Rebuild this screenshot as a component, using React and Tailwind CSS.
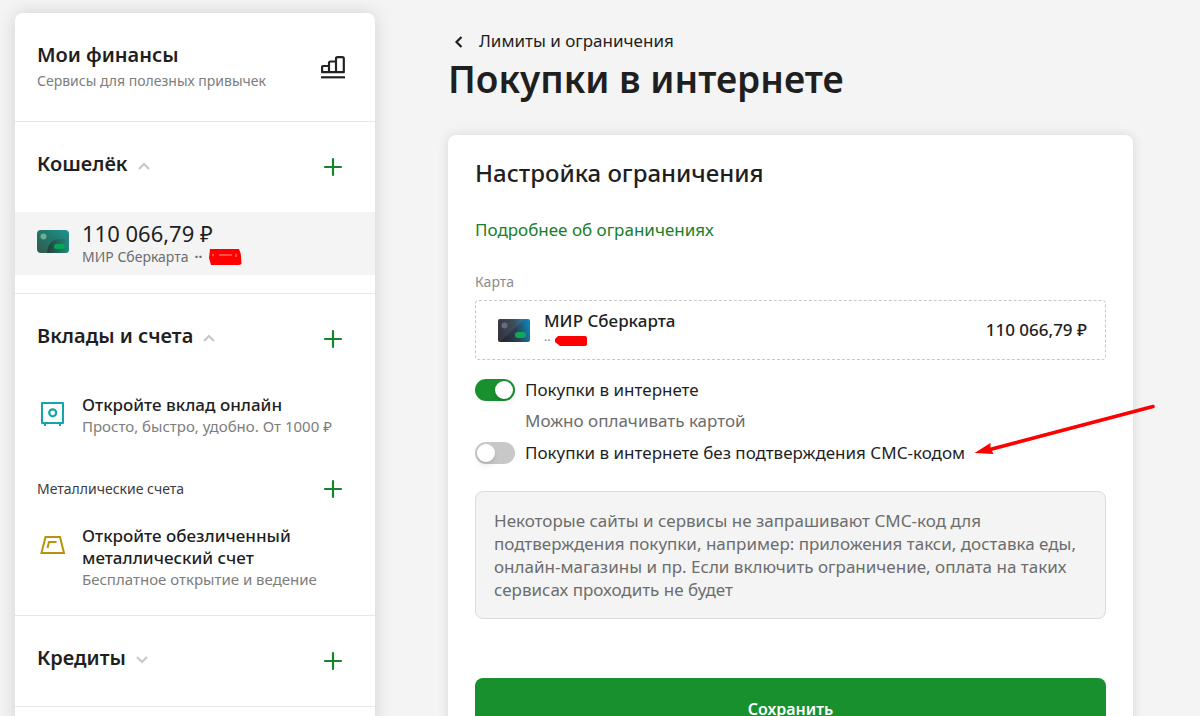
import { useState } from "react";

function PlusButton({ label }) {
  return (
    <button type="button" aria-label={label} className="shrink-0 text-[#16842b]">
      <svg width="20" height="20" viewBox="0 0 20 20" fill="none" stroke="currentColor" strokeWidth="2.2" strokeLinecap="round">
        <path d="M10 2v16M2 10h16" />
      </svg>
    </button>
  );
}

function Caret({ open }) {
  return (
    <svg width="12" height="8" viewBox="0 0 12 8" fill="none" stroke="#c8c8c8" strokeWidth="2.2" className="mt-1">
      <path d={open ? "M1 7l5-5 5 5" : "M1 1l5 5 5-5"} />
    </svg>
  );
}

function SectionHeader({ title, open, addLabel }) {
  return (
    <div className="flex h-[90px] items-center justify-between">
      <button type="button" aria-expanded={open} className="flex items-center gap-2.5 pb-1.5 text-xl font-semibold">
        {title}
        <Caret open={open} />
      </button>
      <PlusButton label={addLabel} />
    </div>
  );
}

function ChartIcon() {
  return (
    <svg width="24" height="24" viewBox="0 0 24 24" fill="none" stroke="#222" strokeWidth="2.2" strokeLinejoin="round">
      <path d="M1.100 17.200V12a1 1 0 0 1 1-1H8v6.200zM8 17.200V8a1.500 1.500 0 0 1 1.500-1.500H15v10.700zM15 17.200V3.700A1.500 1.500 0 0 1 16.500 2.200h4.800a1.500 1.500 0 0 1 1.500 1.500v13.500z" />
      <path d="M0 22.300h24" />
    </svg>
  );
}

function GreenCard() {
  return (
    <svg width="32" height="23" viewBox="0 0 32 23" className="shrink-0">
      <defs>
        <linearGradient id="green-card" x1="0" y1="1" x2="1" y2="0">
          <stop offset="0" stopColor="#34584a" />
          <stop offset="0.6" stopColor="#217a70" />
          <stop offset="1" stopColor="#1f9490" />
        </linearGradient>
        <linearGradient id="green-card-wave" x1="0" y1="0" x2="1" y2="0">
          <stop offset="0" stopColor="#1f4038" />
          <stop offset="1" stopColor="#248a80" />
        </linearGradient>
      </defs>
      <rect width="32" height="23" rx="4" fill="url(#green-card)" />
      <path d="M10 23C11 13 16 9 24 9c4 0 7-1 8-3v13a4 4 0 0 1-4 4z" fill="url(#green-card-wave)" />
      <circle cx="6.500" cy="6.500" r="3" fill="#6cae96" />
      <rect x="17" y="14" width="11" height="5" rx="2.500" fill="#08a652" />
    </svg>
  );
}

function DarkCard() {
  return (
    <svg width="32" height="23" viewBox="0 0 32 23" className="shrink-0">
      <defs>
        <linearGradient id="dark-card" x1="0" y1="0.600" x2="1" y2="0.400">
          <stop offset="0" stopColor="#23232f" />
          <stop offset="0.550" stopColor="#2f3d4c" />
          <stop offset="1" stopColor="#0c84b8" />
        </linearGradient>
      </defs>
      <rect width="32" height="23" rx="2" fill="url(#dark-card)" />
      <path d="M2 23L27 0H2a2 2 0 0 0-2 2v19a2 2 0 0 0 2 2z" fill="#fff" opacity="0.080" />
      <circle cx="6.500" cy="6.500" r="3" fill="#6a6a78" />
      <rect x="17" y="13" width="11" height="6" rx="3" fill="#10a858" />
    </svg>
  );
}

function SafeIcon() {
  return (
    <svg width="32" height="28" viewBox="0 0 32 28" fill="none" stroke="#12a5ab" strokeWidth="2" className="shrink-0">
      <path d="M5 3h21v20H5z" strokeLinejoin="round" />
      <path d="M8 23v3M23 23v3" />
      <circle cx="15.700" cy="12.800" r="3.500" strokeWidth="2.200" />
    </svg>
  );
}

function IngotIcon() {
  return (
    <svg width="32" height="30" viewBox="0 0 32 30" fill="none" stroke="#b8920a" strokeWidth="2" className="shrink-0">
      <path d="M8.500 6h14.500l4 16H4.500z" />
      <path d="M10.500 17l1.500-6h7.500" />
    </svg>
  );
}

function Offer({ icon, title, note }) {
  return (
    <a href="#" className="flex items-start gap-[13px]">
      <span className="mt-1.5">{icon}</span>
      <span>
        <span className="block text-[17px] leading-[22px] font-medium">{title}</span>
        <span className="block text-[15px] leading-5 text-[#7d7d7d]">{note}</span>
      </span>
    </a>
  );
}

function Sidebar() {
  return (
    <aside className="w-[360px] shrink-0 rounded-lg bg-white shadow-[0_0_18px_rgba(0,0,0,0.14)]">
      <div className="flex h-[109px] items-center justify-between border-b border-[#e8e8e8] px-[22px]">
        <div>
          <h2 className="text-xl leading-7 font-semibold">Мои финансы</h2>
          <p className="text-sm leading-6 text-[#7d7d7d]">Сервисы для полезных привычек</p>
        </div>
        <span className="mr-2">
          <ChartIcon />
        </span>
      </div>

      <section className="border-b border-[#e8e8e8] pb-[18px]">
        <div className="pr-8 pl-[22px]">
          <SectionHeader title="Кошелёк" open addLabel="Добавить в кошелёк" />
        </div>
        <a href="#" className="flex h-[63px] items-start gap-[13px] bg-[#f4f4f4] px-[22px] pt-2">
          <span className="mt-2.5">
            <GreenCard />
          </span>
          <span>
            <span className="block text-[22px] leading-[26px]">110 066,79 ₽</span>
            <span className="flex items-center gap-1.5 text-sm leading-[22px] text-[#6d6d6d]">
              <span>МИР Сберкарта</span>
              <span className="font-bold">··</span>
              <svg width="34" height="18" viewBox="0 0 34 18">
                <path d="M2 1L31 1Q33 5 33 9L33.500 16L31 17L3 17L1 10Z" fill="#fe0000" />
                <path d="M4 7h2M11 7h13M28 6v3" stroke="#ff9c9c" strokeWidth="1" />
              </svg>
            </span>
          </span>
        </a>
      </section>

      <section className="border-b border-[#e8e8e8] pr-8 pb-[26px] pl-[22px]">
        <SectionHeader title="Вклады и счета" open addLabel="Открыть вклад или счёт" />
        <div className="pt-2.5">
          <Offer icon={<SafeIcon />} title="Откройте вклад онлайн" note="Просто, быстро, удобно. От 1000 ₽" />
        </div>
        <div className="flex items-center justify-between pt-[43px] pb-[26px]">
          <h3 className="text-sm leading-5 text-[#3c3c3c]">Металлические счета</h3>
          <PlusButton label="Открыть металлический счёт" />
        </div>
        <Offer
          icon={<IngotIcon />}
          title={<>Откройте обезличенный<br />металлический счет</>}
          note="Бесплатное открытие и ведение"
        />
      </section>

      <section className="border-b border-[#e8e8e8] pr-8 pl-[22px]">
        <SectionHeader title="Кредиты" open={false} addLabel="Оформить кредит" />
      </section>
    </aside>
  );
}

function Toggle({ id, label, checked, onChange }) {
  return (
    <div className="flex items-center gap-2.5">
      <input
        id={id}
        type="checkbox"
        role="switch"
        checked={checked}
        onChange={e => onChange(e.target.checked)}
        className="h-[22px] w-10 shrink-0 cursor-pointer appearance-none rounded-full bg-[#c8c8c8] p-0.5 transition before:block before:size-[18px] before:rounded-full before:bg-white before:shadow-md before:transition checked:bg-[#18902e] checked:before:translate-x-[18px]"
      />
      <label htmlFor={id} className="text-[17px] leading-6">{label}</label>
    </div>
  );
}

function Arrow() {
  return (
    <svg width="184" height="58" viewBox="0 0 184 58" className="pointer-events-none absolute -top-10 -right-[50px]">
      <path d="M181 5.500L18 48.500" stroke="#fe0000" strokeWidth="3.500" strokeLinecap="round" />
      <path d="M2.500 52L18.500 42L18.500 47L21.500 53Z" fill="#fe0000" />
    </svg>
  );
}

export default function App() {
  const [online, setOnline] = useState(true);
  const [withoutSms, setWithoutSms] = useState(false);

  return (
    <div className="flex min-h-screen gap-[73px] bg-[#f4f4f4] pt-[13px] pr-[67px] pl-[15px] font-['Noto_Sans',sans-serif] text-[#1f1f1f]">
      <Sidebar />

      <main className="min-w-0 flex-1 pt-4">
        <a href="#" className="flex items-center gap-3.5 pl-1.5 text-[17px] leading-6">
          <svg width="11" height="12" viewBox="0 0 11 12" fill="none" stroke="#1f1f1f" strokeWidth="2.2" className="mt-0.5">
            <path d="M7.500 1l-5 5 5 5" />
          </svg>
          Лимиты и ограничения
        </a>
        <h1 className="text-[37px] leading-[52px] font-semibold">Покупки в интернете</h1>

        <form
          onSubmit={e => e.preventDefault()}
          className="mt-[30px] rounded-lg bg-white px-[27px] pt-[22px] pb-8 shadow-[0_0_12px_rgba(0,0,0,0.12)]"
        >
          <h2 className="text-2xl leading-8 font-medium">Настройка ограничения</h2>
          <a href="#" className="mt-[29px] block text-[17px] leading-6 text-[#16802c]">Подробнее об ограничениях</a>

          <p className="mt-[30px] text-sm leading-5 text-[#8c8c8c]">Карта</p>
          <div className="mt-2 flex h-[60px] items-center rounded border border-dashed border-[#c8c8c8] pr-[18px] pl-[22px]">
            <DarkCard />
            <div className="ml-3.5 flex-1">
              <div className="text-[17px] leading-[22px] font-medium">МИР Сберкарта</div>
              <div className="flex h-[18px] items-center gap-1 text-xs text-[#7d7d7d]">
                ··
                <svg width="34" height="12" viewBox="0 0 34 12">
                  <path d="M4 1H31Q33 1 33 3V9Q33 11 31 11H6L1 7V4Z" fill="#fe0000" />
                </svg>
              </div>
            </div>
            <div className="text-[17px] leading-6 font-medium">110 066,79 ₽</div>
          </div>

          <div className="mt-[18px]">
            <Toggle id="online" label="Покупки в интернете" checked={online} onChange={setOnline} />
          </div>
          <p className="mt-[7px] pl-[50px] text-[17px] leading-6 text-[#6d6d6d]">Можно оплачивать картой</p>
          <div className="relative mt-2">
            <Toggle
              id="without-sms"
              label="Покупки в интернете без подтверждения СМС-кодом"
              checked={withoutSms}
              onChange={setWithoutSms}
            />
            <Arrow />
          </div>

          <p className="mt-[26px] rounded-lg border border-[#dcdcdc] bg-[#f4f4f4] px-[18px] py-[17px] text-[17px] leading-[23px] text-[#6d6d6d]">
            Некоторые сайты и сервисы не запрашивают СМС-код для подтверждения покупки, например: приложения такси,
            доставка еды, онлайн-магазины и пр. Если включить ограничение, оплата на таких сервисах проходить не будет
          </p>

          <button type="submit" className="mt-[59px] h-[62px] w-full rounded-lg bg-[#18902e] text-base font-semibold text-white">
            Сохранить
          </button>
        </form>
      </main>
    </div>
  );
}
